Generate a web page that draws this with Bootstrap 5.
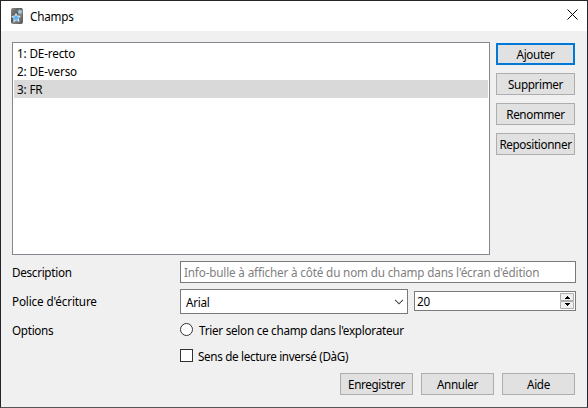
<!DOCTYPE html>
<html lang="fr">
<head>
<meta charset="utf-8">
<title>Champs</title>
<link href="https://cdn.jsdelivr.net/npm/bootstrap@5.3.0/dist/css/bootstrap.min.css" rel="stylesheet">
<style>
html,body{height:408px;overflow:hidden}
body{font:11.7px/18px "Noto Sans","Open Sans",sans-serif;color:#000;letter-spacing:-.3px}
.dialog{width:588px;height:408px;background:#f0f0f0;border:1px solid #26242b;border-bottom-color:#56555a}
.titlebar{height:30px;background:#fff;padding:0 8px 0 9px}
.titlebar svg{flex:none}
.titlebar h1{font-size:11.7px;line-height:18px;margin:0 0 1px 6px;letter-spacing:-.2px}
.content{padding:11px 11px 0}
.fields{width:478px;height:213px;background:#fff;border:1px solid #828790;padding:1px}
.fields .list-group-item{height:18px;padding:0 3px;line-height:18px;font-size:11.7px;letter-spacing:-.15px;color:#000;background:#fff}
.fields .chosen{background:#d9d9d9}
.side{width:79px;gap:8px;padding-top:1px;margin-left:6px}
.btn-win{height:22px;padding:0;border:1px solid #adadad;border-radius:0;background:#e1e1e1;color:#000;font-size:11.7px;line-height:20px;letter-spacing:-.36px;white-space:nowrap}
.btn-win.default{border:2px solid #0078d7;line-height:18px}
.form-grid{display:grid;grid-template-columns:168px 396px;grid-template-rows:22px 32px 29px 23px;margin-top:6px}
.box{border:1px solid #7a7a7a;border-radius:0;background:#fff;color:#000;font-size:11.7px}
.box:focus{box-shadow:none}
.hint{height:22px;min-height:0;padding:0 3px;line-height:20px;letter-spacing:-.16px}
.hint::placeholder{color:#808080;opacity:1}
.font-row{padding-top:6px;gap:6px}
.combo{width:228px;height:25px;padding:0 3px 0 5px}
.spin{width:162px;height:20px;padding:0 1px 0 2px;margin-top:2px}
.spinner{width:14px;height:16px}
.wide-text{letter-spacing:-.14px}
.mark-box{width:13px;height:13px;border:1px solid #333;background:#fff}
.radio-text{margin-left:6px;letter-spacing:-.26px}
.check-text{margin-left:5px;letter-spacing:-.34px}
.check-row{grid-column:2}
.footer-row{gap:8px;padding-right:1px;margin-top:6px}
.footer-row .btn-win{width:73px}
</style>
</head>
<body>
<main class="dialog d-flex flex-column">
<header class="titlebar d-flex align-items-center">
<svg width="14" height="16" viewBox="0 0 14 16"><defs><linearGradient id="g" x2="1" y2="1"><stop stop-color="#8b8b8b"/><stop offset=".45" stop-color="#555"/><stop offset=".55" stop-color="#858585"/><stop offset="1" stop-color="#555"/></linearGradient></defs><rect x="1" width="12" height="16" rx="2" fill="url(#g)"/><path d="M6 5.5l1.3 2.7 3 .1-2.1 2.1.8 3-2.7-1.4-2.6 1.6.4-3.1-2.3-2 3.1-.5z" fill="#58b3f2" stroke="#e8f5ff" stroke-width=".8"/><path d="M9.8 1.4l.7 1.3 1.5.2-1 1.1.2 1.5-1.4-.6-1.3.7.2-1.5-1.1-1 1.5-.3z" fill="#8accf6" stroke="#d8edfa" stroke-width=".4"/></svg>
<h1 class="fw-normal">Champs</h1>
<svg class="ms-auto mb-1" width="13" height="12" viewBox="0 0 13 12"><path d="M1.5 1.5l10 10M11.5 1.5l-10 10" stroke="#000" stroke-width="1"/></svg>
</header>
<div class="content">
<section class="d-flex">
<div class="fields list-group list-group-flush rounded-0">
<div class="list-group-item border-0">1: DE-recto</div>
<div class="list-group-item border-0">2: DE-verso</div>
<div class="list-group-item border-0 chosen">3: FR</div>
</div>
<div class="side d-flex flex-column">
<button class="btn btn-win default">Ajouter</button>
<button class="btn btn-win">Supprimer</button>
<button class="btn btn-win">Renommer</button>
<button class="btn btn-win">Repositionner</button>
</div>
</section>
<form class="form-grid" onsubmit="return false">
<label class="align-self-center" for="hint">Description</label>
<input id="hint" class="form-control box hint" placeholder="Info-bulle à afficher à côté du nom du champ dans l'écran d'édition">
<label class="align-self-center wide-text pt-1">Police d'écriture</label>
<div class="d-flex align-items-start font-row">
<div class="box combo d-flex align-items-center justify-content-between"><span>Arial</span><svg width="10" height="6" viewBox="0 0 10 6"><path d="M1 .8l4 4 4-4" fill="none" stroke="#444" stroke-width="1.1"/></svg></div>
<div class="box spin d-flex align-items-center justify-content-between"><span>20</span><svg class="spinner" viewBox="0 0 14 16"><path d="M.5.5h13v7H.5zM.5 8.5h13v7H.5z" fill="#f0f0f0" stroke="#adadad"/><path d="M5 6h5V5H9V4H8V3H7v1H6v1H5zM5 10h5v1H9v1H8v1H7v-1H6v-1H5z"/></svg></div>
</div>
<label class="align-self-center">Options</label>
<label class="d-flex align-items-center"><span class="mark-box rounded-circle"></span><span class="radio-text">Trier selon ce champ dans l'explorateur</span></label>
<label class="d-flex align-items-center check-row"><span class="mark-box"></span><span class="check-text">Sens de lecture inversé (DàG)</span></label>
</form>
<footer class="footer-row d-flex justify-content-end">
<button class="btn btn-win">Enregistrer</button><button class="btn btn-win">Annuler</button><button class="btn btn-win">Aide</button>
</footer>
</div>
</main>
<script src="https://cdn.jsdelivr.net/npm/bootstrap@5.3.0/dist/js/bootstrap.bundle.min.js"></script>
</body>
</html>
